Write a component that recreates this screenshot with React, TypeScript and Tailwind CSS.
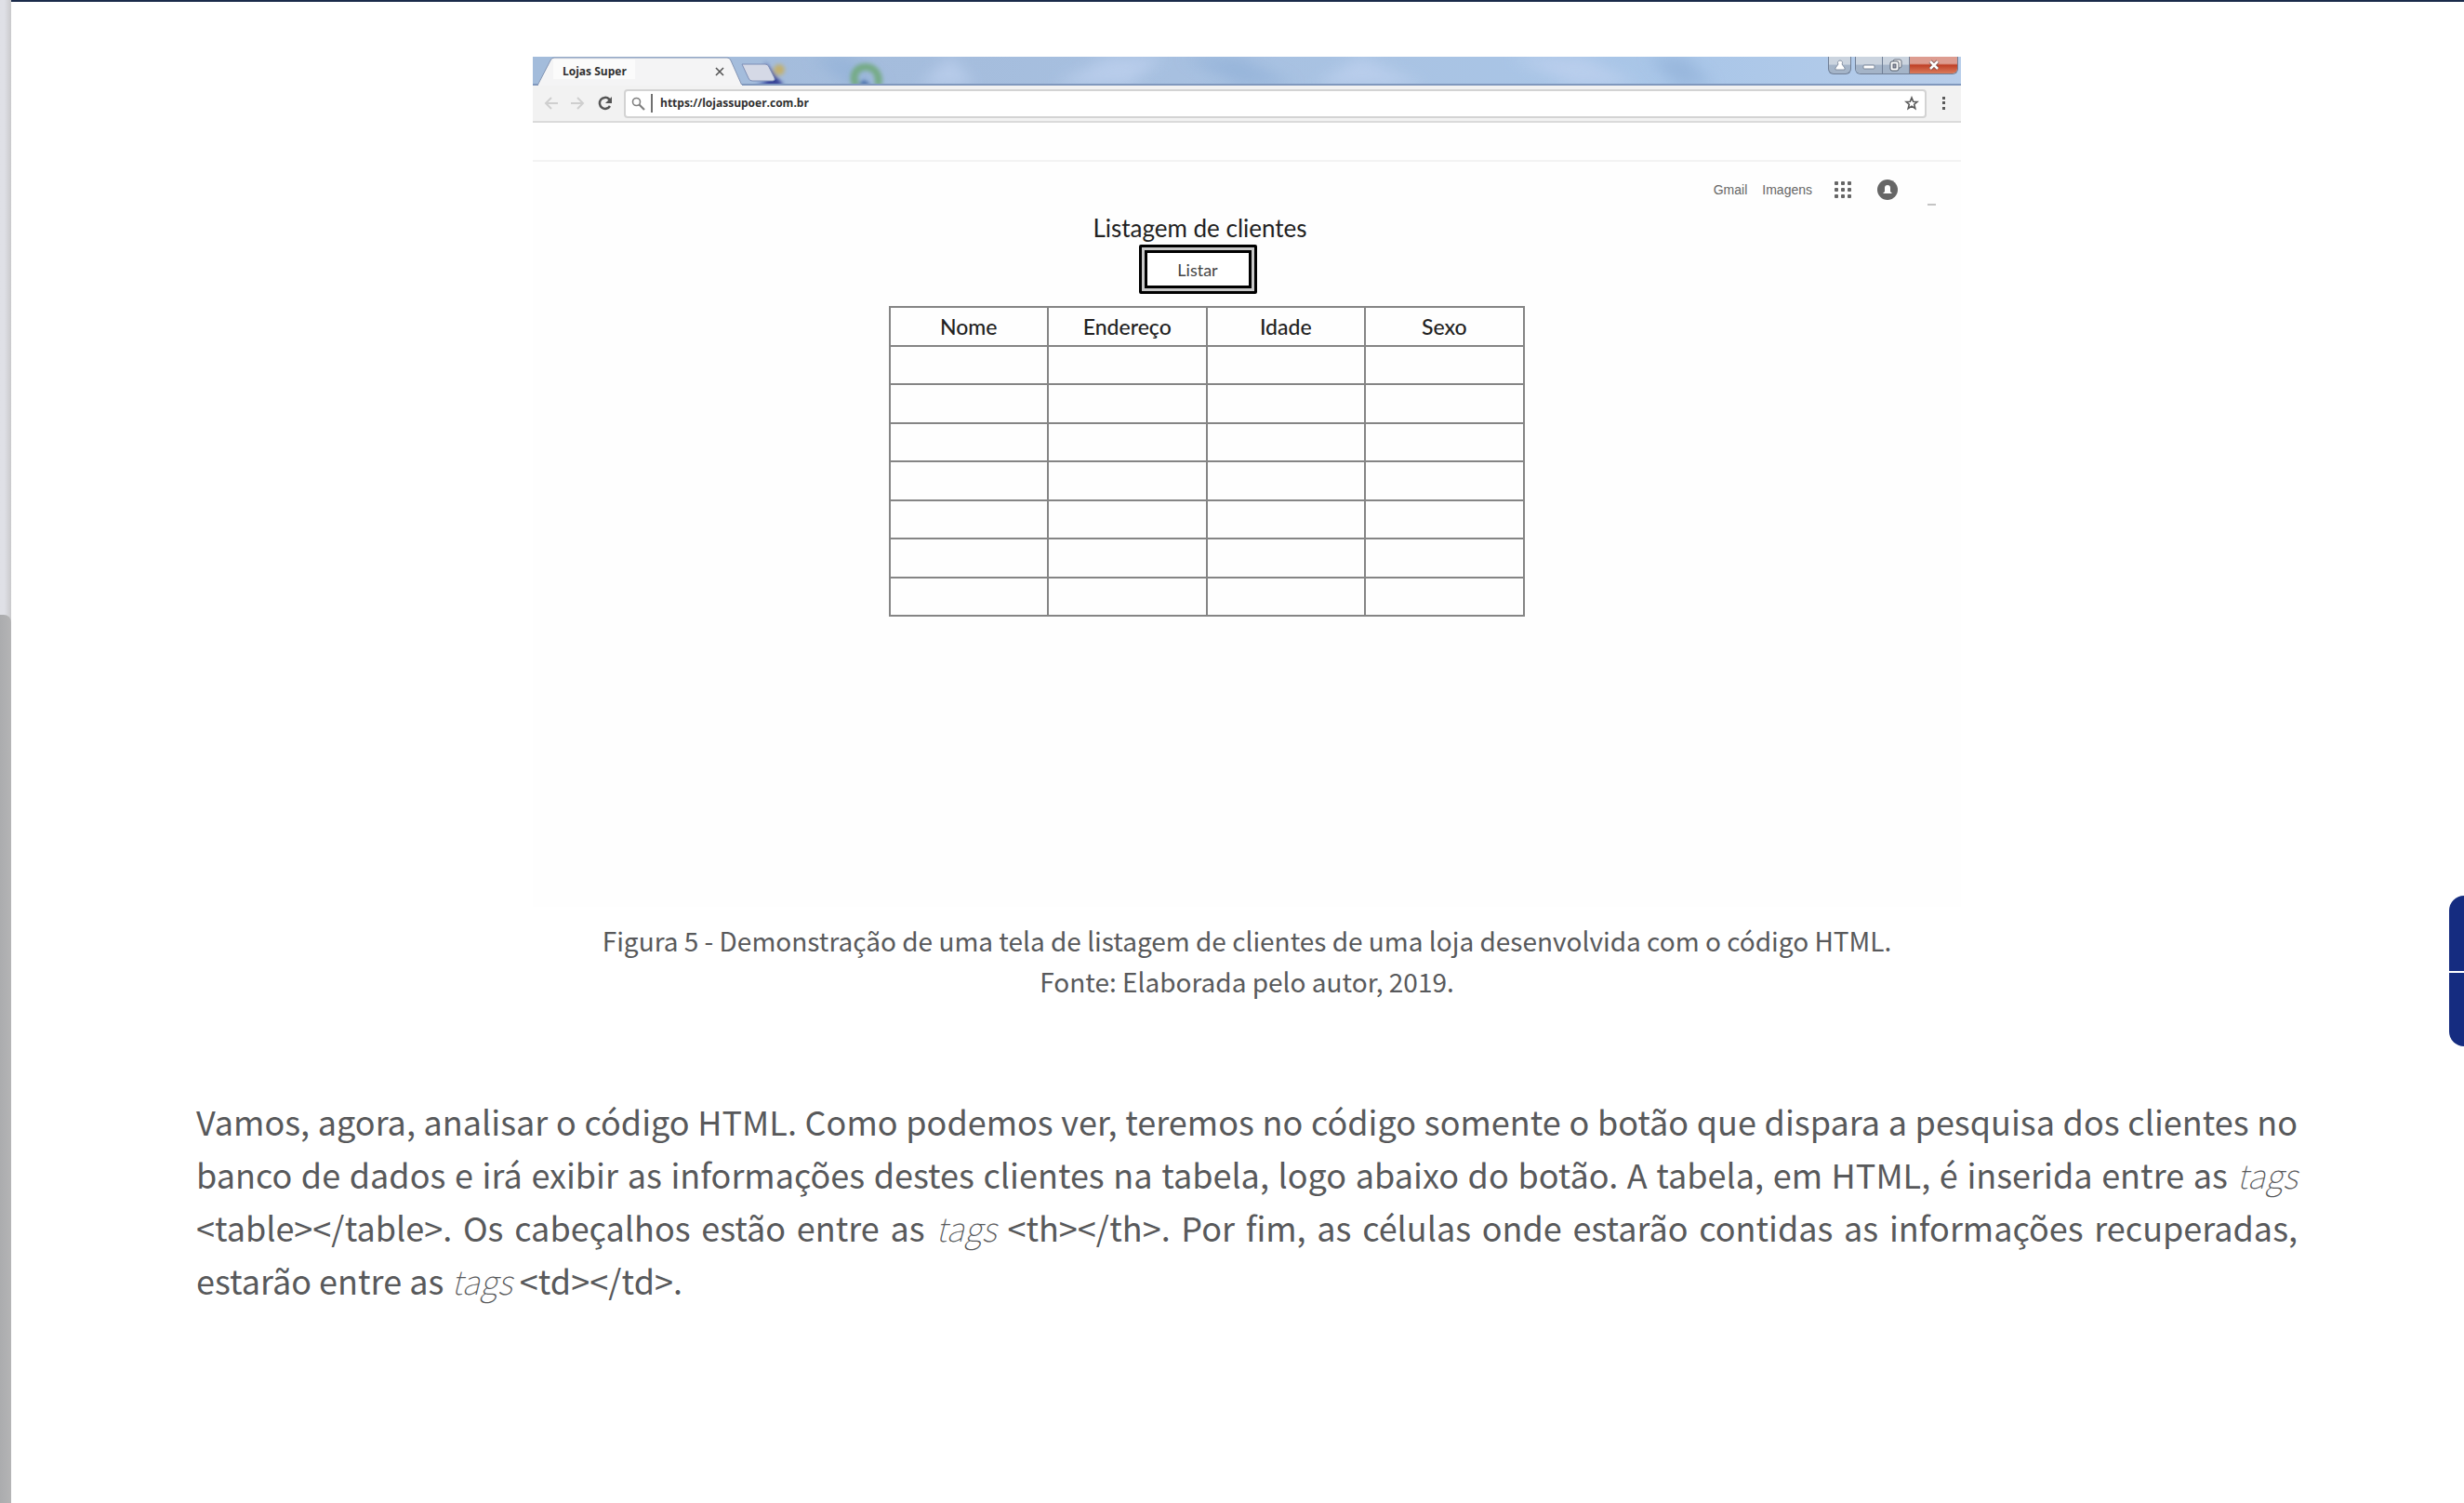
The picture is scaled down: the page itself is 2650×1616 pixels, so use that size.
import React from "react";

const columns = ["Nome", "Endereço", "Idade", "Sexo"];
const emptyRows = [1, 2, 3, 4, 5, 6, 7];

function TitleBar() {
  return (
    <div className="relative flex h-[31px] items-start justify-between overflow-hidden bg-[#a9c1e0]">
      <svg className="absolute inset-0 h-full w-full" viewBox="0 0 1536 31" preserveAspectRatio="none" aria-hidden="true">
        <defs>
          <filter id="soft" x="-20%" y="-40%" width="140%" height="180%">
            <feGaussianBlur stdDeviation="2" />
          </filter>
          <filter id="wide" x="-20%" y="-40%" width="140%" height="180%">
            <feGaussianBlur stdDeviation="8" />
          </filter>
          <linearGradient id="sky" x1="0" x2="1" y1="0" y2="0">
            <stop offset="0" stopColor="#a3bcdb" />
            <stop offset="0.3" stopColor="#a5bddd" />
            <stop offset="0.6" stopColor="#a9c3e3" />
            <stop offset="0.8" stopColor="#a9c6e8" />
            <stop offset="1" stopColor="#b7cdea" />
          </linearGradient>
        </defs>
        <rect width="1536" height="31" fill="url(#sky)" />
        <g filter="url(#wide)" fill="#bdd0ee" opacity="0.8">
          <path d="M415 31 450 0 475 31Z" />
          <path d="M560 31 620 0 680 0 640 31Z" />
          <path d="M840 31 890 0 960 31Z" />
          <path d="M1050 0 1120 31 1190 31 1130 0Z" />
        </g>
        <g filter="url(#wide)" fill="#92b1d8" opacity="0.7">
          <path d="M300 0 340 31 380 31 340 0Z" />
          <path d="M700 0 760 31 820 31 760 0Z" />
          <path d="M1200 0 1230 31 1270 31 1240 0Z" />
        </g>
        <g filter="url(#soft)">
          <path d="M240 31 262 22 270 31Z" fill="#24359a" />
          <path d="M250 6 262 22 270 31 252 29Z" fill="#343f94" />
          <circle cx="265" cy="14" r="6" fill="#c2b070" />
          <path d="M348 31C342 20 348 11 358 11S374 20 371 31" fill="none" stroke="#76ab87" strokeWidth="8" />
          <path d="M350 31 356 25 364 31Z" fill="#3a62a0" />
        </g>
        <path d="M225 8H250q3 0 4 3l6 12q1 3-2 3H236q-3 0-4-3Z" fill="#d5d9e6" stroke="#7f8fb6" />
        <path d="M0 30H1536" stroke="#8098bd" strokeWidth="2" />
      </svg>

      <div className="relative flex h-[31px] w-[226px] items-center justify-between pr-5 pl-8">
        <svg className="absolute inset-0" width="226" height="31" viewBox="0 0 226 31" aria-hidden="true">
          <path d="M5 31 19 4Q20 1 23 1H209Q212 1 213 4L225 31Z" fill="#f4f4f5" stroke="#8294b3" />
          <path d="M6 30H225V31H6Z" fill="#f4f4f5" />
          <path d="M22 3H110V24H22Z" fill="#fbfbfb" />
        </svg>
        <span className="relative font-['Open_Sans',sans-serif] text-[12px] leading-4 font-bold text-[#303030]">Lojas Super</span>
        <button type="button" aria-label="Fechar guia" className="relative">
          <svg width="10" height="10" viewBox="0 0 10 10" className="block">
            <path d="M1 1 9 9M9 1 1 9" stroke="#555" strokeWidth="1.6" />
          </svg>
        </button>
      </div>

      <div className="relative flex gap-1 pr-[3px]">
        <button type="button" aria-label="Perfil" className="flex h-[19px] w-[25px] items-center justify-center rounded-b-md border border-t-0 border-[#707f96] bg-linear-to-b from-[#cbd4df] from-45% to-[#a4b4c8] to-50%">
          <svg width="12" height="14" viewBox="0 0 12 14"><path d="M6 2a2.5 2.5 0 0 1 2 4l3 4v2H1v-2l3-4a2.5 2.5 0 0 1 2-4Z" fill="#fff" stroke="#8490a2" /></svg>
        </button>
        <div className="flex h-[19px] overflow-hidden rounded-b-md border border-t-0 border-[#707f96]">
          <button type="button" aria-label="Minimizar" className="flex w-[29px] items-center justify-center border-r border-[#707f96] bg-linear-to-b from-[#cbd4df] from-45% to-[#a4b4c8] to-50%">
            <svg width="14" height="14" viewBox="0 0 14 14"><rect x="1" y="7" width="12" height="4" rx="1" fill="#fff" stroke="#7d889a" /></svg>
          </button>
          <button type="button" aria-label="Restaurar" className="flex w-[29px] items-center justify-center border-r border-[#707f96] bg-linear-to-b from-[#cbd4df] from-45% to-[#a4b4c8] to-50%">
            <svg width="14" height="14" viewBox="0 0 14 14"><rect x="4" y="1" width="9" height="9" rx="2" fill="#eee" stroke="#666f7e" /><rect x="1" y="3" width="9" height="10" rx="2" fill="#fff" stroke="#555e6c" /><rect x="4" y="6" width="3" height="4" fill="#99a" stroke="#555e6c" /></svg>
          </button>
          <button type="button" aria-label="Fechar" className="flex w-[51px] items-center justify-center bg-linear-to-b from-[#dd9c90] from-40% via-[#bf3f25] via-50% to-[#d97a5c]">
            <svg width="12" height="12" viewBox="0 0 12 12"><path d="M2 2 10 10M10 2 2 10" stroke="#6f4a4a" strokeWidth="4" /><path d="M2 2 10 10M10 2 2 10" stroke="#fff" strokeWidth="2.5" /></svg>
          </button>
        </div>
      </div>
    </div>
  );
}

function Toolbar() {
  return (
    <div className="flex h-10 items-center border-b-2 border-[#dadada] bg-[#f2f2f2] pr-4 pl-3">
      <div className="flex items-center gap-[14px]">
        <button type="button" aria-label="Voltar">
          <svg width="15" height="14" viewBox="0 0 15 14" className="block"><path d="M8 1 2 7 8 13M2 7H15" fill="none" stroke="#cfcfcf" strokeWidth="2" /></svg>
        </button>
        <button type="button" aria-label="Avançar">
          <svg width="15" height="14" viewBox="0 0 15 14" className="block"><path d="M7 1 13 7 7 13M13 7H0" fill="none" stroke="#cfcfcf" strokeWidth="2" /></svg>
        </button>
        <button type="button" aria-label="Recarregar">
          <svg width="16" height="16" viewBox="0 0 16 16" className="block"><path d="M13 11A6 6 0 1 1 12 3.500L13 5" fill="none" stroke="#555" strokeWidth="2.5" /><path d="M15 1V8H8Z" fill="#555" /></svg>
        </button>
      </div>
      <div className="ml-3 flex h-[31px] flex-1 items-center rounded-sm border-2 border-[#d3d3d3] bg-white px-[6px]">
        <svg width="15" height="15" viewBox="0 0 15 15" aria-hidden="true"><circle cx="5.500" cy="5.500" r="4" fill="none" stroke="#808080" strokeWidth="1.6" /><path d="M8.500 8.500 14 14" stroke="#808080" strokeWidth="2.2" /></svg>
        <span className="ml-[6px] h-5 w-[2px] bg-[#707070]" />
        <input
          type="text"
          aria-label="Endereço do site"
          defaultValue="https://lojassupoer.com.br"
          className="ml-2 min-w-0 flex-1 bg-transparent font-['Open_Sans',sans-serif] text-[12px] leading-4 font-bold text-[#303030] outline-none"
        />
        <button type="button" aria-label="Adicionar aos favoritos">
          <svg width="16" height="16" viewBox="0 0 16 16" className="block"><path d="M8 2 9.700 6.200 14 6.400 10.700 9.200 11.800 13.700 8 11.200 4.200 13.700 5.300 9.200 2 6.400 6.300 6.200Z" fill="none" stroke="#5a5a5a" strokeWidth="1.600" /></svg>
        </button>
      </div>
      <button type="button" aria-label="Menu" className="ml-4">
        <svg width="5" height="16" viewBox="0 0 5 16" className="block" fill="#5a5a5a"><rect x="1" y="1" width="3" height="3" /><rect x="1" y="6" width="3" height="3" /><rect x="1" y="12" width="3" height="3" /></svg>
      </button>
    </div>
  );
}

function BrowserWindow() {
  return (
    <div className="min-h-[914px] bg-[#fefefe]">
      <TitleBar />
      <Toolbar />
      <div className="h-[42px] border-b-2 border-[#f3f3f3]" />

      <nav className="flex h-[59px] items-center justify-end pr-[27px] font-['Liberation_Sans',sans-serif] text-[14px] leading-5 text-[#666]">
        <a href="#gmail">Gmail</a>
        <a href="#imagens" className="ml-4">Imagens</a>
        <button type="button" aria-label="Aplicativos" className="ml-6">
          <svg width="18" height="18" viewBox="0 0 18 18" className="block" fill="#666">
            {[0, 7, 14].map((y) => [0, 7, 14].map((x) => <rect key={`${x}-${y}`} x={x} y={y} width="4" height="4" rx="1" />))}
          </svg>
        </button>
        <button type="button" aria-label="Notificações" className="ml-7">
          <svg width="22" height="22" viewBox="0 0 22 22" className="block"><circle cx="11" cy="11" r="11" fill="#666" /><path d="M6 15 8 13V9a3 3 0 0 1 6 0V13L16 15Z" fill="#fff" /></svg>
        </button>
        <span className="mt-8 ml-8 h-[2px] w-[9px] bg-[#c4c4c4]" />
      </nav>

      <div className="flex flex-col items-center pr-[101px] font-['Lato',sans-serif] text-[#2b2b2b]">
        <h2 className="text-[26px] leading-6 text-[#222]">Listagem de clientes</h2>
        <button type="button" className="mt-[6px] mr-[5px] h-[53px] w-[127px] rounded-xs border-[3px] border-black bg-[#c8c8c8] p-[3px]">
          <span className="flex h-full items-center justify-center border-[3px] border-black bg-white text-[18px] leading-5 text-[#444]">Listar</span>
        </button>
      </div>

      <div className="flex justify-center pt-[13px] pr-[87px]">
        <table className="w-[684px] table-fixed border-collapse font-['Lato',sans-serif] text-[23px] leading-7 text-[#222]">
          <thead>
            <tr className="h-[42px]">
              {columns.map((name) => (
                <th key={name} scope="col" className="border-2 border-[#858585] p-0 font-medium">{name}</th>
              ))}
            </tr>
          </thead>
          <tbody>
            {emptyRows.map((row) => (
              <tr key={row} className="h-[42px] odd:h-[41px]">
                {columns.map((name) => (
                  <td key={name} className="border-2 border-[#858585] p-0" />
                ))}
              </tr>
            ))}
          </tbody>
        </table>
      </div>
    </div>
  );
}

export default function App() {
  return (
    <div className="relative flex min-h-screen bg-white">
      <div className="flex w-3 shrink-0 flex-col bg-linear-to-r from-[#dfe0e6] from-40% to-[#c9c9cb]">
        <div className="h-[661px]" />
        <div className="flex-1 rounded-tr-lg bg-linear-to-r from-[#abacae] to-[#b4b4b5]" />
      </div>

      <main className="min-w-0 flex-1 border-t-2 border-[#1b2b4b] pt-[59px] pr-[179px] pl-[199px] font-['Noto_Sans_CJK_SC',sans-serif] text-[#58595b]">
        <figure>
          <div className="mx-auto max-w-[1536px]">
            <BrowserWindow />
          </div>
          <figcaption className="mt-[14px] text-center text-[28px] leading-[44px]">
            Figura 5 - Demonstração de uma tela de listagem de clientes de uma loja desenvolvida com o código HTML.
            <br />
            Fonte: Elaborada pelo autor, 2019.
          </figcaption>
        </figure>

        <p className="mt-[100px] text-justify text-[36px] leading-[57px]">
          Vamos, agora, analisar o código HTML. Como podemos ver, teremos no código somente o botão que dispara a pesquisa dos clientes no banco de dados e irá exibir as informações destes clientes na tabela, logo abaixo do botão. A tabela, em HTML, é inserida entre as <em className="font-thin">tags</em> &lt;table&gt;&lt;/table&gt;. Os cabeçalhos estão entre as <em className="font-thin">tags</em> &lt;th&gt;&lt;/th&gt;. Por fim, as células onde estarão contidas as informações recuperadas, estarão entre as <em className="font-thin">tags</em> &lt;td&gt;&lt;/td&gt;.
        </p>
      </main>

      <aside className="absolute top-[963px] right-0 flex w-4 flex-col gap-[2px]">
        <button type="button" aria-label="Abrir sumário" className="h-[81px] rounded-tl-[20px] bg-[#152c80]" />
        <button type="button" aria-label="Abrir ferramentas" className="h-[79px] rounded-bl-[20px] bg-[#152c80]" />
      </aside>
    </div>
  );
}
